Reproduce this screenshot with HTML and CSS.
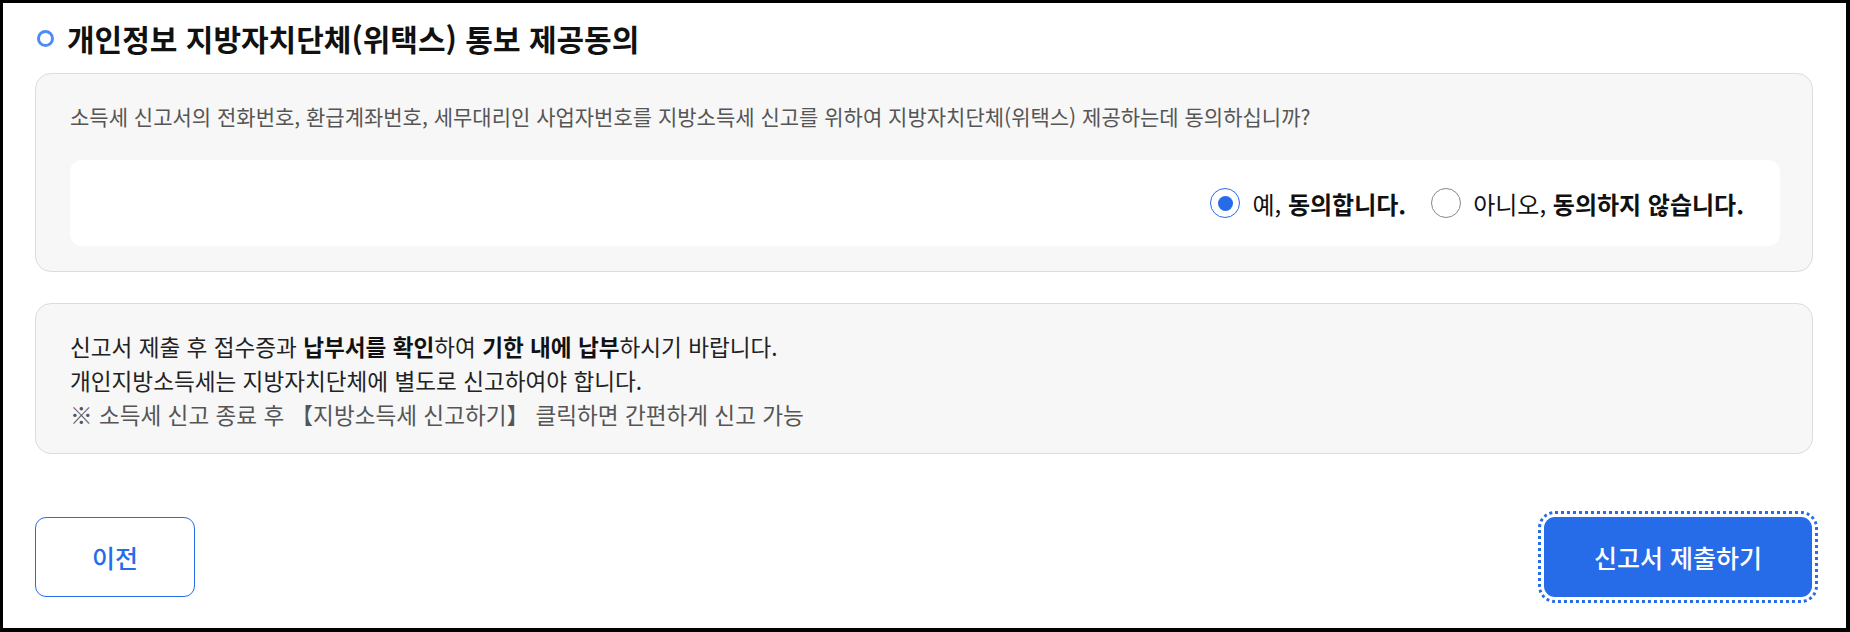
FILE: index.html
```html
<!DOCTYPE html>
<html lang="ko">
<head>
<meta charset="utf-8">
<link rel="stylesheet" href="styles.css">
</head>
<body>
<div class="frame">
  <h2 class="title"><span class="bullet"></span>개인정보 지방자치단체(위택스) 통보 제공동의</h2>
  <section class="box consent">
    <p class="question">소득세 신고서의 전화번호, 환급계좌번호, 세무대리인 사업자번호를 지방소득세 신고를 위하여 지방자치단체(위택스) 제공하는데 동의하십니까?</p>
    <div class="choices">
      <label class="choice"><span class="radio checked"></span><span>예, <b>동의합니다.</b></span></label>
      <label class="choice"><span class="radio"></span><span>아니오, <b>동의하지 않습니다.</b></span></label>
    </div>
  </section>
  <section class="box notice">
    <p>신고서 제출 후 접수증과 <b>납부서를 확인</b>하여 <b>기한 내에 납부</b>하시기 바랍니다.</p>
    <p>개인지방소득세는 지방자치단체에 별도로 신고하여야 합니다.</p>
    <p class="note">※ 소득세 신고 종료 후 【지방소득세 신고하기】 클릭하면 간편하게 신고 가능</p>
  </section>
  <div class="actions">
    <button class="btn prev" type="button">이전</button>
    <button class="btn submit" type="button">신고서 제출하기</button>
  </div>
</div>
</body>
</html>
```
FILE: styles.css
```css
* { box-sizing: border-box; }
html, body { margin: 0; padding: 0; }
body {
  background: #000;
  padding: 3px 4px 4px 3px;
  font-family: "Noto Sans CJK KR", "Noto Sans", sans-serif;
  color: #222;
}
.frame {
  background: #fff;
  height: 625px;
  padding: 12px 33px 0 32px;
  display: flex;
  flex-direction: column;
}
.title {
  margin: 0;
  height: 46px;
  display: flex;
  align-items: center;
  gap: 13px;
  font-size: 30px;
  font-weight: 700;
  color: #111;
  letter-spacing: 0;
}
.bullet {
  width: 17px;
  height: 17px;
  border: 3.5px solid #4d8cf5;
  border-radius: 50%;
  margin-left: 2px;
  flex: none;
}
.box {
  background: #f7f7f7;
  border: 1px solid #dcdcdc;
  border-radius: 16px;
}
.consent {
  margin-top: 12px;
  padding: 28px 32px 25px 34px;
}
.question {
  margin: 0;
  font-size: 21px;
  line-height: 28px;
  color: #555;
}
.choices {
  margin-top: 30px;
  background: #fff;
  border-radius: 12px;
  height: 86px;
  display: flex;
  justify-content: flex-end;
  align-items: center;
  gap: 25px;
  padding-right: 36px;
}
.choice {
  display: flex;
  align-items: center;
  gap: 12px;
  font-size: 24px;
  color: #111;
}
.choice b { font-weight: 700; }
.radio {
  width: 30px;
  height: 30px;
  border: 1.5px solid #888;
  border-radius: 50%;
  background: #fff;
  display: flex;
  align-items: center;
  justify-content: center;
}
.radio.checked { border-color: #266be8; }
.radio.checked::after {
  content: "";
  width: 15px;
  height: 15px;
  border-radius: 50%;
  background: #266be8;
}
.notice {
  margin-top: 31px;
  padding: 26px 34px 21px;
  font-size: 22.6px;
  line-height: 34px;
  color: #222;
}
.notice p { margin: 0; }
.notice b { font-weight: 700; color: #111; }
.notice .note { color: #555; }
.actions {
  margin-top: 63px;
  display: flex;
  justify-content: space-between;
  align-items: center;
}
.btn {
  height: 80px;
  font-family: inherit;
  font-size: 25px;
  font-weight: 500;
  border-radius: 11px;
  cursor: pointer;
}
.prev {
  width: 160px;
  background: #fff;
  border: 1px solid #266be8;
  color: #266be8;
}
.submit {
  width: 268px;
  background: #266be8;
  border: none;
  color: #fff;
  outline: 3px dotted #266be8;
  outline-offset: 3px;
  margin-right: 1px;
}
```
